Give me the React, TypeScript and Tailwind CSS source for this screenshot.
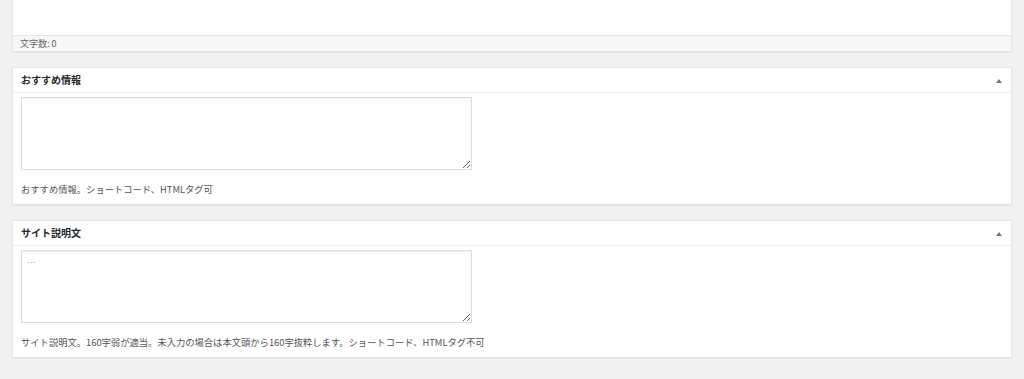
import React from "react";

const font = { fontFamily: '"Noto Sans CJK JP", "Noto Sans", sans-serif' };

function Panel({ title, help, placeholder }: { title: string; help: string; placeholder?: string }) {
  return (
    <div className="bg-white border border-[#e5e5e5] shadow-[0_1px_1px_rgba(0,0,0,0.04)] mb-[15px]">
      <div className="h-[25px] border-b border-[#eeeeee] flex items-center justify-between pl-[8px] pr-[9px]">
        <span className="text-[10px] font-bold text-[#23282d] leading-none">{title}</span>
        <svg width="6" height="4" viewBox="0 0 6 4" className="mt-[1px]">
          <polygon points="3,0 6,4 0,4" fill="#72777c" />
        </svg>
      </div>
      <div className="pl-[8px] pt-[4px]">
        <textarea
          readOnly
          placeholder={placeholder}
          className="block w-[451px] h-[73px] border border-[#dddddd] shadow-[inset_0_1px_2px_rgba(0,0,0,0.07)] px-[5px] pt-[5px] text-[9px] text-[#555] placeholder:text-[#999] outline-none"
          style={font}
        />
        <p className="text-[9.3px] text-[#555] leading-[14px] pt-[12px] pb-[8px]">{help}</p>
      </div>
    </div>
  );
}

export default function App() {
  return (
    <div className="w-[1024px] h-[379px] bg-[#f1f1f1] px-[12px] overflow-hidden" style={font}>
      <div className="bg-white border border-t-0 border-[#e5e5e5] shadow-[0_1px_1px_rgba(0,0,0,0.04)] mb-[15px]">
        <div className="h-[35px]" />
        <div className="h-[16px] border-t border-[#e5e5e5] bg-[#f7f7f7] flex items-center pl-[7px]">
          <span className="text-[9px] text-[#666] leading-none">文字数: 0</span>
        </div>
      </div>
      <Panel title="おすすめ情報" help="おすすめ情報。ショートコード、HTMLタグ可" />
      <Panel
        title="サイト説明文"
        placeholder="…"
        help="サイト説明文。160字弱が適当。未入力の場合は本文頭から160字抜粋します。ショートコード、HTMLタグ不可"
      />
    </div>
  );
}
